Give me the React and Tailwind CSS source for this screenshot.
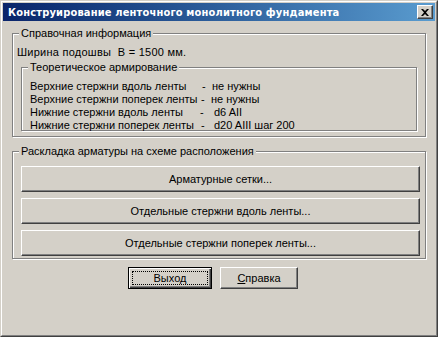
import React from 'react'

const rows = [
    { label: 'Верхние стержни вдоль ленты', lw: 'w-[172px]', vw: 'w-[10px]', value: 'не нужны' },
    { label: 'Верхние стержни поперек ленты', lw: 'w-[171px]', vw: 'w-[10px]', value: 'не нужны' },
    { label: 'Нижние стержни вдоль ленты', lw: 'w-[170px]', vw: 'w-[14px]', value: 'd6 AII' },
    { label: 'Нижние стержни поперек ленты', lw: 'w-[171px]', vw: 'w-[13px]', value: 'd20 AIII шаг 200' },
]

// classic raised button edge
const raised = 'border border-t-white border-l-white border-r-[#404040] border-b-[#404040] shadow-[inset_-1px_-1px_0_#808080]'
const etched = 'border border-[#808080] shadow-[1px_1px_0_#fff,inset_1px_1px_0_#fff]'

function GroupBox({ title, className, children }) {
    return (
        <div className={`relative ${etched} ${className}`}>
            <span className="absolute left-[6px] top-[-7px] bg-[#d4d0c8] px-[2px] leading-[13px]">{title}</span>
            {children}
        </div>
    )
}

function Button({ children, className }) {
    return (
        <button className={`${raised} bg-[#d4d0c8] flex items-center justify-center leading-[13px] ${className}`}>
            {children}
        </button>
    )
}

export default function App() {
    return (
        <div
            className="w-[438px] h-[337px] bg-[#d4d0c8] text-black text-[11px] border border-t-[#d4d0c8] border-l-[#d4d0c8] border-r-[#404040] border-b-[#404040]"
            style={{ fontFamily: '"Liberation Sans", Arial, sans-serif' }}
        >
            <div className="h-full border border-t-white border-l-white border-r-[#808080] border-b-[#808080] p-px flex flex-col">
                {/* title bar */}
                <div className="h-[18px] flex items-center bg-gradient-to-r from-[#0a246a] to-[#5a9ccf] pl-[5px] pr-[2px] shrink-0">
                    <span
                        className="text-white font-bold text-[11px] tracking-[0.17px] flex-1 leading-none"
                        style={{ fontFamily: '"DejaVu Sans Condensed", "DejaVu Sans", sans-serif', fontStretch: 'condensed' }}
                    >
                        Конструирование ленточного монолитного фундамента
                    </span>
                    <button className={`${raised} bg-[#d4d0c8] w-[16px] h-[14px] flex items-center justify-center`}>
                        <svg width="8" height="7" viewBox="0 0 8 7">
                            <path d="M0 0h2l2 2 2-2h2L5 3.5 8 7H6L4 5 2 7H0l3-3.5z" fill="#000" />
                        </svg>
                    </button>
                </div>

                <div className="flex flex-col pl-[9px]">
                    <GroupBox title="Справочная информация" className="mt-[12px] w-[414px] h-[104px]">
                        <div className="pl-[4px] pt-[12px] leading-[13px] tracking-[0.25px]">Ширина подошвы&nbsp; В = 1500 мм.</div>
                        <GroupBox title="Теоретическое армирование" className="mt-[8px] ml-[8px] w-[396px] h-[64px]">
                            <div className="pl-[8px] pt-[12px] flex flex-col">
                                {rows.map((r, i) => (
                                    <div className="flex leading-[13px] whitespace-nowrap" key={i}>
                                        <span className={r.lw}>{r.label}</span>
                                        <span className={r.vw}>-</span>
                                        <span>{r.value}</span>
                                    </div>
                                ))}
                            </div>
                        </GroupBox>
                    </GroupBox>

                    <GroupBox title="Раскладка арматуры на схеме расположения" className="mt-[14px] w-[414px] h-[108px]">
                        <div className="flex flex-col gap-[6px] pl-[8px] pt-[14px]">
                            <Button className="w-[399px] h-[26px]">Арматурные сетки...</Button>
                            <Button className="w-[399px] h-[26px]">Отдельные стержни вдоль ленты...</Button>
                            <Button className="w-[399px] h-[26px]">Отдельные стержни поперек ленты...</Button>
                        </div>
                    </GroupBox>

                    <div className="flex gap-[8px] mt-[8px] pl-[116px]">
                        <button className="w-[84px] h-[22px] border border-black bg-[#d4d0c8] shadow-[inset_1px_1px_0_#fff,inset_-1px_-1px_0_#404040,inset_-2px_-2px_0_#808080] p-[3px] flex">
                            <span className="flex-1 border border-dotted border-black flex items-center justify-center leading-[13px]">Выход</span>
                        </button>
                        <Button className="w-[78px] h-[22px]">
                            <span><span className="underline">С</span>правка</span>
                        </Button>
                    </div>
                </div>
            </div>
        </div>
    )
}
